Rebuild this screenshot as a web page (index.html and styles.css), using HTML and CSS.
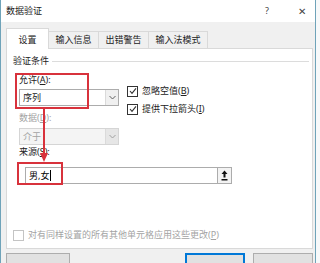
FILE: index.html
```html
<!DOCTYPE html>
<html lang="zh-CN">
<head>
  <meta charset="UTF-8">
  <title>数据验证</title>
  <link rel="stylesheet" href="styles.css">
</head>
<body>

  <div class="window">
    <div class="titlebar">
      <span class="title">数据验证</span>
      <span class="help">?</span>
      <span class="close">&#x2715;</span>
    </div>

    <div class="client">
      <div class="tabs">
        <div class="tab active">设置</div>
        <div class="tab" style="width: 50px">输入信息</div>
        <div class="tab" style="width: 50px">出错警告</div>
        <div class="tab" style="width: 59px">输入法模式</div>
      </div>

      <div class="panel">
        <div class="group-title">
          <span>验证条件</span>
          <div class="group-line"></div>
        </div>

        <div class="criteria">
          <div class="left-col">
            <div class="label label-allow">允许(<u>A</u>):</div>
            <div class="combo">
              <span class="combo-text">序列</span>
              <span class="combo-arrow"><svg width="7" height="5" viewBox="0 0 7 5"><path d="M0.5 1 L3.5 4 L6.5 1" fill="none" stroke="#606060" stroke-width="1"/></svg></span>
            </div>

            <div class="label disabled label-data">数据(<u>D</u>):</div>
            <div class="combo combo-disabled">
              <span class="combo-text">介于</span>
              <span class="combo-arrow"><svg width="7" height="5" viewBox="0 0 7 5"><path d="M0.5 1 L3.5 4 L6.5 1" fill="none" stroke="#a0a0a0" stroke-width="1"/></svg></span>
            </div>

            <div class="label label-source">来源(<u>S</u>):</div>
          </div>

          <div class="right-col">
            <label class="check">
              <span class="box"><svg width="8" height="8" viewBox="0 0 8 8"><path d="M1 4 L3 6.3 L7 1.3" fill="none" stroke="#333" stroke-width="1.1"/></svg></span>
              <span>忽略空值(<u>B</u>)</span>
            </label>
            <label class="check">
              <span class="box"><svg width="8" height="8" viewBox="0 0 8 8"><path d="M1 4 L3 6.3 L7 1.3" fill="none" stroke="#333" stroke-width="1.1"/></svg></span>
              <span>提供下拉箭头(<u>I</u>)</span>
            </label>
          </div>
        </div>

        <div class="source-row">
          <div class="source-input">男,女<span class="caret"></span></div>
          <div class="source-btn">
            <svg width="7" height="11" viewBox="0 0 7 11"><path d="M3.5 0.5 L6.5 4 L4.5 4 L4.5 7.5 L2.5 7.5 L2.5 4 L0.5 4 Z" fill="#111"/><rect x="0.5" y="9" width="6" height="1.5" fill="#111"/></svg>
          </div>
        </div>

        <label class="check disabled apply-all">
          <span class="box"></span>
          <span>对有同样设置的所有其他单元格应用这些更改(<u>P</u>)</span>
        </label>

        <!-- annotation marks drawn over the dialog -->
        <div class="mark mark-allow"></div>
        <div class="mark mark-source"></div>
        <svg class="mark-arrow" width="8" height="54" viewBox="0 0 8 54">
          <rect x="3" y="0" width="2" height="46" fill="#d8323c"/>
          <path d="M0 45 L8 45 L4 54 Z" fill="#d8323c"/>
        </svg>
      </div>

      <div class="buttons">
        <div class="btn" style="width: 64px"></div>
        <div class="spacer"></div>
        <div class="btn btn-default"></div>
        <div class="btn"></div>
      </div>
    </div>
  </div>

</body>
</html>
```

FILE: styles.css
```css
body {
  margin: 0;
  width: 320px;
  height: 263px;
  overflow: hidden;
  background-color: #f7f9fa;
  font-family: "Noto Sans", "Noto Sans CJK SC", sans-serif;
  font-size: 9px;
  color: #1a1a1a;
}

u {
  text-decoration: underline;
  text-underline-offset: 1px;
}

.window {
  width: 314px;
  height: 263px;
  border-left: 1px solid #6fa3b9;
  border-right: 1px solid #6fa3b9;
  background-color: #f0f0f0;
}

.titlebar {
  height: 22px;
  background-color: #ffffff;
  display: flex;
  align-items: center;
  padding-left: 5px;
  line-height: 12px;
}

.title {
  flex: 1;
  color: #222;
}

.help {
  font-size: 9px;
  color: #444;
  margin-right: 29px;
}

.close {
  font-size: 10px;
  color: #444;
  margin-right: 9px;
}

.client {
  padding: 6px 2px 0 5px;
}

.tabs {
  display: flex;
  align-items: flex-end;
  height: 20px;
  position: relative;
  z-index: 1;
}

.tab {
  height: 17px;
  box-sizing: border-box;
  border: 1px solid #d9d9d9;
  border-bottom: none;
  border-left: none;
  background-color: #f0f0f0;
  display: flex;
  align-items: center;
  justify-content: center;
  line-height: 12px;
  color: #222;
}

.tab.active {
  width: 43px;
  height: 21px;
  margin-bottom: -1px;
  border-left: 1px solid #d9d9d9;
  background-color: #ffffff;
  padding-top: 1px;
}

.panel {
  position: relative;
  height: 201px;
  box-sizing: border-box;
  background-color: #ffffff;
  border: 1px solid #d9d9d9;
  padding: 6px 0 0 6px;
  display: flex;
  flex-direction: column;
}

.group-title {
  display: flex;
  align-items: center;
  line-height: 12px;
  color: #222;
}

.group-line {
  flex: 1;
  height: 1px;
  background-color: #dcdcdc;
  margin: 0 3px 0 3px;
}

.criteria {
  display: flex;
  gap: 8px;
  padding-left: 6px;
}

.left-col {
  width: 100px;
  display: flex;
  flex-direction: column;
}

.label {
  line-height: 12px;
  color: #222;
}

.label-allow {
  margin-top: 7px;
}

.label-data {
  margin-top: 6px;
}

.label-source {
  margin-top: 1px;
}

.disabled,
.label.disabled {
  color: #a3a3a3;
}

.combo {
  margin-top: 3px;
  height: 17px;
  box-sizing: border-box;
  border: 1px solid #acacac;
  background-color: #ffffff;
  display: flex;
  align-items: center;
}

.combo-disabled {
  margin-top: 4px;
  background-color: #f4f4f4;
  border-color: #d5d5d5;
  color: #a3a3a3;
}

.combo-text {
  flex: 1;
  padding-left: 3px;
  line-height: 12px;
}

.combo-arrow {
  width: 12px;
  height: 15px;
  border-left: 1px solid #dadada;
  background-color: #f0f0f0;
  display: flex;
  align-items: center;
  justify-content: center;
}

.combo-disabled .combo-arrow {
  background-color: #e6e6e6;
}

.right-col {
  display: flex;
  flex-direction: column;
  gap: 6px;
  padding-top: 18px;
}

.check {
  display: flex;
  align-items: center;
  gap: 4px;
  line-height: 12px;
  color: #222;
}

.box {
  width: 9px;
  height: 9px;
  border: 1px solid #333;
  background-color: #fff;
  display: flex;
  align-items: center;
  justify-content: center;
}

.source-row {
  display: flex;
  margin-top: 9px;
  margin-left: 12px;
}

.source-input {
  width: 193px;
  height: 17px;
  box-sizing: border-box;
  border: 1px solid #acacac;
  padding-left: 3px;
  line-height: 15px;
  color: #000;
  display: flex;
  align-items: center;
}

.caret {
  width: 1px;
  height: 11px;
  background-color: #000;
  margin-left: 1px;
}

.source-btn {
  width: 14px;
  height: 17px;
  box-sizing: border-box;
  border: 1px solid #acacac;
  border-left: none;
  background-color: #f3f3f3;
  display: flex;
  align-items: center;
  justify-content: center;
}

.apply-all {
  margin-top: auto;
  margin-bottom: 7px;
  color: #a3a3a3;
}

.apply-all .box {
  border-color: #c4c4c4;
}

.mark {
  position: absolute;
  box-sizing: border-box;
  border: 2px solid #d8323c;
}

.mark-allow {
  left: 8px;
  top: 24px;
  width: 74px;
  height: 36px;
}

.mark-source {
  left: 10px;
  top: 113px;
  width: 46px;
  height: 23px;
}

.mark-arrow {
  position: absolute;
  left: 33px;
  top: 59px;
}

.buttons {
  display: flex;
  gap: 8px;
  margin-top: 4px;
}

.spacer {
  flex: 1;
}

.btn {
  width: 60px;
  height: 22px;
  box-sizing: border-box;
  border: 1px solid #adadad;
  background-color: #e1e1e1;
}

.btn-default {
  border: 2px solid #0078d7;
}
```
